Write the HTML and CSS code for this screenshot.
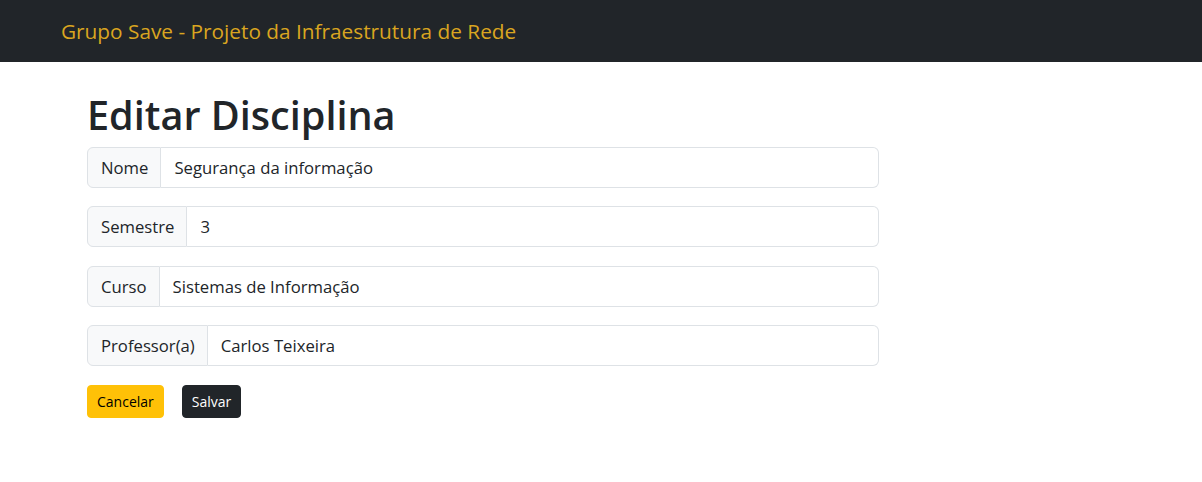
FILE: index.html
```html
<!DOCTYPE html>
<html lang="pt-BR">
<head>
<meta charset="utf-8">
<title>Editar Disciplina</title>
<link rel="stylesheet" href="styles.css">
</head>
<body>
<nav class="navbar">
  <span class="brand">Grupo Save - Projeto da Infraestrutura de Rede</span>
</nav>
<main class="content">
  <h1 class="title">Editar Disciplina</h1>
  <form class="form">
    <div class="group">
      <span class="label">Nome</span>
      <input class="field" type="text" value="Segurança da informação">
    </div>
    <div class="group">
      <span class="label">Semestre</span>
      <input class="field" type="text" value="3">
    </div>
    <div class="group">
      <span class="label">Curso</span>
      <input class="field" type="text" value="Sistemas de Informação">
    </div>
    <div class="group">
      <span class="label">Professor(a)</span>
      <input class="field" type="text" value="Carlos Teixeira">
    </div>
    <div class="actions">
      <button type="button" class="btn btn-warning">Cancelar</button>
      <button type="submit" class="btn btn-dark">Salvar</button>
    </div>
  </form>
</main>
</body>
</html>
```

FILE: styles.css
```css
* { box-sizing: border-box; }
html, body { margin: 0; padding: 0; }
body {
  font-family: "Open Sans", "Noto Sans", sans-serif;
  font-size: 16.7px;
  color: #212529;
  background: #fff;
}
.navbar {
  height: 62px;
  background: #212529;
  display: flex;
  align-items: center;
  padding-left: 61px;
}
.brand {
  color: #daa520;
  font-size: 20.8px;
  line-height: 30px;
}
.content {
  margin-left: 87px;
  width: 792px;
  padding-top: 29px;
}
.title {
  margin: 0 0 8px 0;
  font-size: 39.6px;
  line-height: 48px;
  font-weight: 600;
}
.form {
  display: flex;
  flex-direction: column;
  gap: 18.4px;
}
.group {
  display: flex;
  height: 41px;
}
.label {
  display: flex;
  align-items: center;
  padding: 0 12px 0 13px;
  background: #f8f9fa;
  border: 1px solid #dee2e6;
  border-radius: 6px 0 0 6px;
  font-size: 16.7px;
  white-space: nowrap;
}
.field {
  flex: 1;
  min-width: 0;
  margin: 0;
  border: 1px solid #dee2e6;
  border-left: 0;
  border-radius: 0 6px 6px 0;
  padding: 0 13px;
  font: inherit;
  color: #212529;
  background: #fff;
}
.actions {
  display: flex;
  gap: 18px;
}
.btn {
  font-family: inherit;
  font-size: 14px;
  line-height: 21px;
  padding: 5px 9px;
  border: 1px solid transparent;
  border-radius: 4px;
  height: 33px;
}
.btn-warning { background: #ffc107; color: #000; border-color: #ffc107; }
.btn-dark { background: #212529; color: #fff; border-color: #212529; }
```
